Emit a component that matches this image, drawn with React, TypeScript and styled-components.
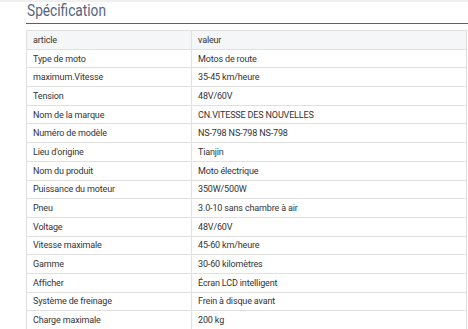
import React from 'react';
import styled, { createGlobalStyle } from 'styled-components';

const GlobalStyle = createGlobalStyle`
  html, body {
    margin: 0;
    padding: 0;
    background: #ffffff;
    overflow: hidden;
  }
`;

const Page = styled.div`
  width: 468px;
  height: 329px;
  overflow: hidden;
  border-top: 2px solid #f0f0f0;
  box-sizing: border-box;
  font-family: Roboto, "Liberation Sans", Arial, sans-serif;
`;

const Section = styled.section`
  margin-left: 26px;
  width: 460px;
`;

const Title = styled.h2`
  margin: 0;
  padding: 0 0 0 1px;
  height: 21px;
  font-size: 16.5px;
  font-weight: 400;
  line-height: 18px;
  color: #55647b;
  border-bottom: 1px solid #5a6066;
`;

const TitleText = styled.span`
  display: inline-block;
  transform: scaleX(0.83);
  transform-origin: left center;
`;

const Table = styled.table`
  margin-top: 6px;
  width: 441px;
  border-collapse: collapse;
  table-layout: fixed;
  font-size: 9px;
  letter-spacing: -0.15px;
  color: #333333;
`;

const Row = styled.tr<{ $head?: boolean }>`
  height: 18.7px;
  background: ${(p) => (p.$head ? '#f5f6f8' : '#ffffff')};
`;

const Cell = styled.td<{ $w?: number }>`
  width: ${(p) => (p.$w ? `${p.$w}px` : 'auto')};
  border: 1px solid #e0e0e0;
  padding: 0 0 0 6px;
  vertical-align: middle;
  white-space: nowrap;
`;

const rows: [string, string][] = [
  ['Type de moto', 'Motos de route'],
  ['maximum.Vitesse', '35-45 km/heure'],
  ['Tension', '48V/60V'],
  ['Nom de la marque', 'CN.VITESSE DES NOUVELLES'],
  ['Numéro de modèle', 'NS-798 NS-798 NS-798'],
  ["Lieu d'origine", 'Tianjin'],
  ['Nom du produit', 'Moto électrique'],
  ['Puissance du moteur', '350W/500W'],
  ['Pneu', '3.0-10 sans chambre à air'],
  ['Voltage', '48V/60V'],
  ['Vitesse maximale', '45-60 km/heure'],
  ['Gamme', '30-60 kilomètres'],
  ['Afficher', 'Écran LCD intelligent'],
  ['Système de freinage', 'Frein à disque avant'],
  ['Charge maximale', '200 kg'],
];

export default function App() {
  return (
    <Page>
      <GlobalStyle />
      <Section>
        <Title>
          <TitleText>Spécification</TitleText>
        </Title>
        <Table>
          <tbody>
            <Row $head>
              <Cell $w={158}>article</Cell>
              <Cell>valeur</Cell>
            </Row>
            {rows.map(([k, v]) => (
              <Row key={k}>
                <Cell>{k}</Cell>
                <Cell>{v}</Cell>
              </Row>
            ))}
          </tbody>
        </Table>
      </Section>
    </Page>
  );
}
